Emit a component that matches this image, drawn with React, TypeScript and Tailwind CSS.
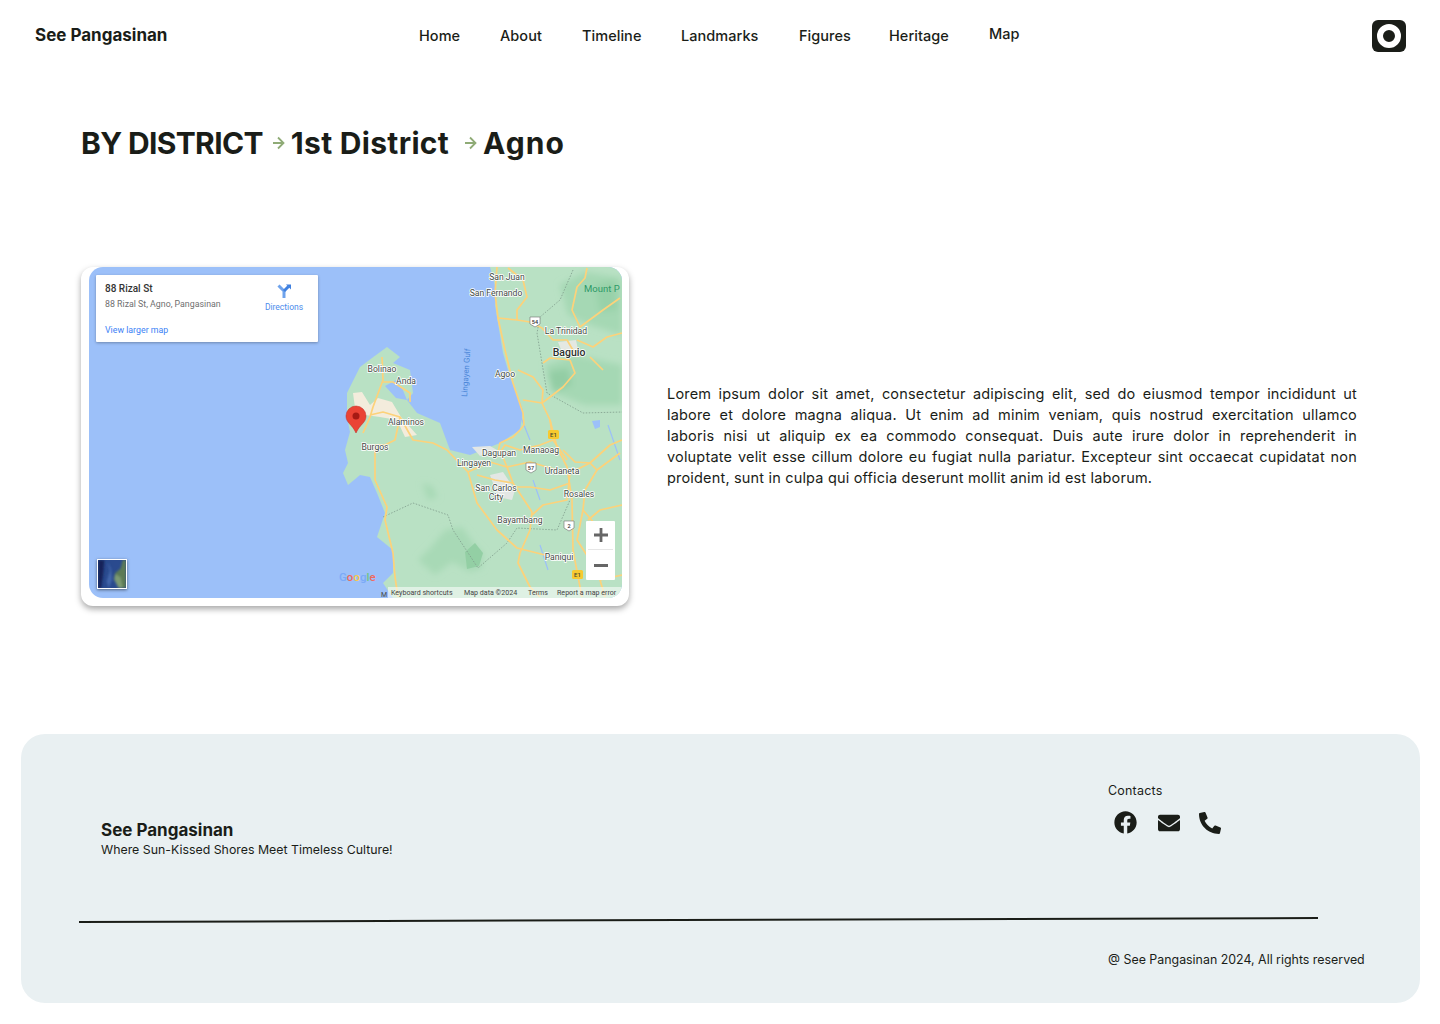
import { FaFacebook, FaEnvelope, FaPhoneAlt } from "react-icons/fa";

const navLinks = [
    { label: "Home", width: "w-[42px]" },
    { label: "About", width: "w-[43px]" },
    { label: "Timeline", width: "w-[60px]" },
    { label: "Landmarks", width: "w-[79px]" },
    { label: "Figures", width: "w-[51px]" },
    { label: "Heritage", width: "w-[61px]" },
];

const paragraph = [
    "Lorem ipsum dolor sit amet, consectetur adipiscing elit, sed do eiusmod tempor incididunt ut",
    "labore et dolore magna aliqua. Ut enim ad minim veniam, quis nostrud exercitation ullamco",
    "laboris nisi ut aliquip ex ea commodo consequat. Duis aute irure dolor in reprehenderit in",
    "voluptate velit esse cillum dolore eu fugiat nulla pariatur. Excepteur sint occaecat cupidatat non",
];

const roads = [
    "497,267 495,293 498,318 505,350 513,383 523,413 524,425 520,430 513,437 500,443 497,457",
    "498,318 517,320 530,322 542,328 553,340 567,340 577,357",
    "517,320 517,310 527,297 523,280 508,268",
    "570,360 575,373 563,387 550,397 542,403 523,400",
    "518,370 533,377 543,390 542,403 550,420 553,440 567,460",
    "543,363 550,358 570,360",
    "587,268 585,278 577,287 572,310 580,327 603,310 620,298",
    "577,340 593,347 607,337 622,333",
    "590,357 603,370",
    "382,357 383,380 373,407 370,417 363,433",
    "383,382 393,382 410,393 410,402",
    "370,415 383,412 400,417 413,440 433,443 447,450 468,472 477,503 497,530 517,548 545,555",
    "375,445 375,480 387,507 385,520 393,553 395,577 398,597",
    "520,553 530,530 532,512 513,483 507,467 500,450",
    "532,515 543,505 567,500 570,473 590,463 597,470 620,453",
    "550,420 557,447 567,467 572,500 573,550 580,587 582,597",
    "520,553 518,563 530,587 540,597",
    "513,487 530,487 550,490 570,483",
    "583,510 577,540 590,560",
    "468,472 490,462 507,467 530,462 557,470",
    "597,470 585,490 583,510 600,530",
    "605,597 600,580 622,575",
    "563,450 575,462 590,463 610,445 622,440",
    "497,457 505,445 520,450 540,445 553,440",
    "477,475 495,480 513,483",
    "588,520 600,510 622,505",
    "400,417 395,440 385,445 375,445",
];

const labels = [
    { text: "San Juan", x: 507, y: 280 },
    { text: "San Fernando", x: 496, y: 296 },
    { text: "La Trinidad", x: 566, y: 334 },
    { text: "Agoo", x: 505, y: 377 },
    { text: "Bolinao", x: 382, y: 372 },
    { text: "Anda", x: 406, y: 384 },
    { text: "Alaminos", x: 406, y: 425 },
    { text: "Burgos", x: 375, y: 450 },
    { text: "Dagupan", x: 499, y: 456 },
    { text: "Manaoag", x: 541, y: 453 },
    { text: "Lingayen", x: 474, y: 466 },
    { text: "Urdaneta", x: 562, y: 474 },
    { text: "San Carlos", x: 496, y: 491 },
    { text: "City", x: 496, y: 500 },
    { text: "Rosales", x: 579, y: 497 },
    { text: "Bayambang", x: 520, y: 523 },
    { text: "Paniqui", x: 559, y: 560 },
];

const shields = [
    { text: "54", x: 535, y: 322 },
    { text: "57", x: 531, y: 468 },
    { text: "2", x: 569, y: 526 },
];

function MapDrawing() {
    return (
        <svg className="block w-full h-full" viewBox="89 267 533 331" fontFamily="Roboto, sans-serif">
            <defs>
                <filter id="soft" x="-10%" y="-10%" width="120%" height="120%">
                    <feGaussianBlur stdDeviation="3" />
                </filter>
                <filter id="slight" x="-2%" y="-2%" width="104%" height="104%">
                    <feGaussianBlur stdDeviation="0.35" />
                </filter>
            </defs>
            <rect x="89" y="267" width="533" height="331" fill="#9cc0f9" />
            <g filter="url(#slight)">
                {/* main island, east side of the gulf and down the coast */}
                <path
                    d="M490,267 L497,293 L495,305 L498,323 L503,353 L510,377 L523,410 L520,430 L500,443 L470,455 L450,450 L440,423 L417,413 L407,400 L413,393 L410,370 L393,363 L400,357 L387,347 L372,358 L360,367 L347,393 L347,417 L350,432 L345,450 L348,463 L343,473 L348,485 L360,475 L370,477 L377,493 L385,513 L377,537 L393,550 L393,573 L383,583 L393,598 L640,598 L640,250 L490,250 Z"
                    fill="#b9e1c4"
                />
                <path d="M385,386 L396,380 L402,388 L407,400 L396,398 Z" fill="#9cc0f9" />
                {/* hills */}
                <g filter="url(#soft)">
                    <path d="M560,285 L585,272 L622,278 L622,335 L590,325 L568,315 Z" fill="#a5d8b4" />
                    <path d="M545,365 L575,355 L622,365 L622,405 L585,405 L552,392 Z" fill="#a5d8b4" />
                    <path d="M548,372 L568,368 L572,385 L553,392 Z" fill="#93cda4" />
                    <path d="M595,285 L615,280 L618,310 L600,312 Z" fill="#98d1a9" />
                    <path d="M430,548 L445,530 L462,527 L475,545 L483,553 L482,568 L470,572 L452,562 L435,575 L418,560 Z" fill="#a8d9b6" />
                    <path d="M422,483 L432,486 L438,497 L428,500 Z" fill="#a8d9b6" />
                </g>
                <path d="M465,552 L475,543 L483,553 L479,566 L467,569 Z" fill="#93cfa4" />
                {/* built up areas */}
                <path d="M353,393 L362,392 L370,405 L378,398 L392,402 L401,417 L417,435 L405,437 L397,420 L380,417 L365,415 L355,408 Z" fill="#f3ecdc" />
                <path d="M490,475 L503,472 L515,490 L512,500 L498,497 Z" fill="#e3e7e4" />
                <path d="M558,342 L576,340 L578,350 L562,352 Z" fill="#e4e8e2" />
                <path d="M472,447 L490,446 L497,450 L480,456 Z" fill="#e3e7e4" />
                {/* water */}
                <path d="M592,421 L600,420 L600,427 L595,429 Z" fill="#9cc0f9" />
                <path d="M533,480 L540,500 M540,545 L548,570 M520,415 L530,440 M608,425 L620,460" stroke="#9cc0f9" strokeWidth="1.2" fill="none" />
                {/* borders */}
                <g fill="none" stroke="#7f9c8b" strokeWidth="0.8" strokeDasharray="1.5 1.5">
                    <polyline points="383,517 413,503 448,515 453,530 478,568 507,543 517,528 557,530 570,500" />
                    <polyline points="573,270 560,300 540,317 537,333 547,393 583,413 622,412" />
                </g>
                {/* roads */}
                <g fill="none" stroke="#fdd27a" strokeWidth="1.7" strokeLinejoin="round">
                    {roads.map((points) => (
                        <polyline key={points} points={points} />
                    ))}
                </g>
            </g>
            {/* road shields */}
            {shields.map((s) => (
                <g key={s.text}>
                    <path d={`M${s.x - 5},${s.y - 5} h10 v7 l-5,3 l-5,-3 Z`} fill="#fff" stroke="#6b6b6b" strokeWidth="0.6" />
                    <text x={s.x} y={s.y + 1.5} fontSize="5.5" fontWeight="500" fill="#333" textAnchor="middle">{s.text}</text>
                </g>
            ))}
            <rect x="548" y="430" width="11" height="9" rx="1.5" fill="#f7c92f" />
            <text x="553.5" y="437" fontSize="6" fontWeight="500" fill="#4a4a30" textAnchor="middle">E1</text>
            <rect x="572" y="570" width="11" height="9" rx="1.5" fill="#f7c92f" />
            <text x="577.5" y="577" fontSize="6" fontWeight="500" fill="#4a4a30" textAnchor="middle">E1</text>
            {/* place names */}
            <g fontSize="8.6" fill="#3f4a44" textAnchor="middle" stroke="#ffffff" strokeWidth="1.6" style={{ paintOrder: "stroke" }}>
                {labels.map((l) => (
                    <text key={l.text} x={l.x} y={l.y}>{l.text}</text>
                ))}
                <text x="569" y="356" fontSize="10.5" fontWeight="500" fill="#2b2f2d">Baguio</text>
            </g>
            <text x="584" y="292" fontSize="9.5" fill="#2e9a68">Mount P</text>
            <text transform="translate(467,397) rotate(-86)" fontSize="8" fill="#4a86d8">Lingayen Gulf</text>
            {/* marker */}
            <path d="M356,433 C352,424 346,423 346,416 A10,10 0 0 1 366,416 C366,423 360,424 356,433 Z" fill="#ea4335" stroke="#c5221f" strokeWidth="0.5" />
            <circle cx="356" cy="416" r="3.5" fill="#a51a14" />
            {/* google logo */}
            <text x="339" y="581" fontSize="11.5" fontWeight="500">
                <tspan fill="#7baaf7">G</tspan>
                <tspan fill="#ef6a5f">o</tspan>
                <tspan fill="#f7c948">o</tspan>
                <tspan fill="#7baaf7">g</tspan>
                <tspan fill="#6ec384">l</tspan>
                <tspan fill="#ef6a5f">e</tspan>
            </text>
            {/* attribution */}
            <text x="381" y="597" fontSize="7" fill="#444">M</text>
            <rect x="388" y="587" width="234" height="11" fill="#ffffff" fillOpacity="0.55" />
            <g fontSize="7.1" fill="#444">
                <text x="391" y="595">Keyboard shortcuts</text>
                <text x="464" y="595">Map data ©2024</text>
                <text x="528" y="595">Terms</text>
                <text x="557" y="595">Report a map error</text>
            </g>
        </svg>
    );
}

function MapCard() {
    return (
        <div className="w-[548px] h-[339px] shrink-0 bg-white rounded-xl shadow-[0_3px_6px_rgba(0,0,0,0.35)] px-2 pb-2">
            <div className="relative w-[533px] h-[331px] overflow-hidden rounded-[14px] font-['Roboto',sans-serif]">
                <MapDrawing />
                <div className="absolute left-[7px] top-[8px] w-[222px] h-[67px] bg-white rounded-[1px] shadow-[0_1px_3px_rgba(0,0,0,0.3)] flex justify-between">
                    <div className="pl-[9px] pt-[8px] flex flex-col">
                        <span className="text-[10px] leading-[12px] font-medium text-[#333]">88 Rizal St</span>
                        <span className="text-[8.8px] leading-[10px] mt-[4px] text-[#6f6f6f]">88 Rizal St, Agno, Pangasinan</span>
                        <span className="text-[8.8px] leading-[10px] mt-[16px] text-[#3b82f6]">View larger map</span>
                    </div>
                    <div className="w-[68px] pt-[9px] flex flex-col items-center">
                        <svg width="15" height="15" viewBox="0 0 15 15" fill="none">
                            <path d="M1.5,1.5 L7,7 V14" stroke="#6fa3ec" strokeWidth="3" />
                            <path d="M7,7 L11.5,2.5" stroke="#3f80e0" strokeWidth="3" />
                            <path d="M9,0.5 H14 V5.5 Z" fill="#3f80e0" />
                        </svg>
                        <span className="text-[8.5px] leading-[10px] mt-[3px] text-[#4c8cec]">Directions</span>
                    </div>
                </div>
                <div className="absolute left-[8px] top-[292px] w-[30px] h-[30px] border-[1.5px] border-white bg-[#2f4f8f] shadow-[0_1px_3px_rgba(0,0,0,0.5)] overflow-hidden">
                    <svg className="block w-full h-full" viewBox="0 0 26 26">
                        <defs>
                            <filter id="sat"><feGaussianBlur stdDeviation="0.8" /></filter>
                        </defs>
                        <rect width="26" height="26" fill="#2a4a8e" />
                        <g filter="url(#sat)">
                            <path d="M0,0 H6 L5,12 L3,26 H0 Z" fill="#16245a" />
                            <path d="M9,2 L11,10 L8,20 L10,26 L13,18 L12,8 Z" fill="#4266ab" />
                            <path d="M26,0 H23 L21,8 L16,12 L15,17 L20,26 H26 Z" fill="#5c7a55" />
                            <path d="M16,13 L21,16 L23,26 H19 L15,18 Z" fill="#7d9a72" />
                        </g>
                    </svg>
                </div>
                <div className="absolute left-[497px] top-[254px] w-[29px] h-[59px] bg-white rounded-[1px] flex flex-col items-center">
                    <div className="h-[29px] w-[25px] flex items-center justify-center border-b border-[#e6e6e6]">
                        <svg width="14" height="14" viewBox="0 0 14 14"><path d="M5.6,0 H8.4 V5.6 H14 V8.4 H8.4 V14 H5.6 V8.4 H0 V5.6 H5.6 Z" fill="#666" /></svg>
                    </div>
                    <div className="flex-1 flex items-center justify-center">
                        <div className="w-[14px] h-[3px] bg-[#666]" />
                    </div>
                </div>
            </div>
        </div>
    );
}

function Arrow({ className }: { className: string }) {
    return (
        <svg className={className} width="13" height="14" viewBox="0 0 13 14" fill="none" stroke="#8fab76" strokeWidth="1.8">
            <path d="M1,7 H11.5 M6,1.5 L11.5,7 L6,12.5" />
        </svg>
    );
}

export default function App() {
    return (
        <div className="w-[1440px] min-h-[1024px] bg-white font-['Inter',sans-serif] text-[#1a1d18]">
            <header className="h-[71px] pl-[35px] pr-[34px] flex items-center">
                <span className="w-[384px] text-[17px] font-bold">See Pangasinan</span>
                <nav className="flex items-center gap-[39px] text-[14.5px] font-medium tracking-[0.05px]">
                    {navLinks.map((link) => (
                        <a key={link.label} className={`${link.width} whitespace-nowrap`}>{link.label}</a>
                    ))}
                    <a className="mb-[3px] whitespace-nowrap">Map</a>
                </nav>
                <div className="ml-auto w-[34px] h-[32px] rounded-md bg-[#1a1d18] flex items-center justify-center">
                    <div className="w-[24px] h-[24px] rounded-full border-[6px] border-white" />
                </div>
            </header>

            <main className="px-[81px]">
                <h1 className="mt-[53px] h-[38px] flex items-center text-[30px] leading-[38px] font-bold whitespace-nowrap">
                    <span className="tracking-[-0.65px]">BY DISTRICT</span>
                    <Arrow className="ml-[9px] mr-[6px]" />
                    <span className="tracking-[0.3px]">1st District</span>
                    <Arrow className="ml-[15px] mr-[6px]" />
                    <span className="tracking-[1px]">Agno</span>
                </h1>

                <section className="mt-[105px] flex items-center gap-[38px]">
                    <MapCard />
                    <div className="w-[690px] mb-[2px] text-[14.5px] leading-[21px] tracking-[0.18px] text-[#1a1d18]">
                        {paragraph.map((line) => (
                            <p key={line} className="whitespace-nowrap [text-align:justify] [text-align-last:justify]">{line}</p>
                        ))}
                        <p>proident, sunt in culpa qui officia deserunt mollit anim id est laborum.</p>
                    </div>
                </section>
            </main>

            <footer className="mt-[128px] ml-[21px] mr-[20px] mb-[21px] h-[269px] rounded-3xl bg-[#e9f0f2] flex flex-col">
                <div className="h-[185px] flex justify-between">
                    <div className="ml-[80px] mt-[86px]">
                        <h2 className="text-[17px] leading-[20px] font-bold">See Pangasinan</h2>
                        <p className="text-[12.35px] leading-[18px] mt-[1px]">Where Sun-Kissed Shores Meet Timeless Culture!</p>
                    </div>
                    <div className="w-[312px] pt-[49px]">
                        <p className="text-[12.5px] leading-[16px] tracking-[0.2px]">Contacts</p>
                        <div className="mt-[11px] ml-[6px] flex items-center text-[#1a1d18]">
                            <FaFacebook size={23} />
                            <FaEnvelope size={22} className="ml-[21px] mt-[2px]" />
                            <FaPhoneAlt size={22} className="ml-[19px] mt-[2px]" />
                        </div>
                    </div>
                </div>
                <div className="ml-[58px] w-[1239px] h-[2px] bg-[#1a1d18] -rotate-[0.18deg]" />
                <p className="mt-[30px] ml-[1087px] text-[12.4px] leading-[18px] whitespace-nowrap">@ See Pangasinan 2024, All rights reserved</p>
            </footer>
        </div>
    );
}
